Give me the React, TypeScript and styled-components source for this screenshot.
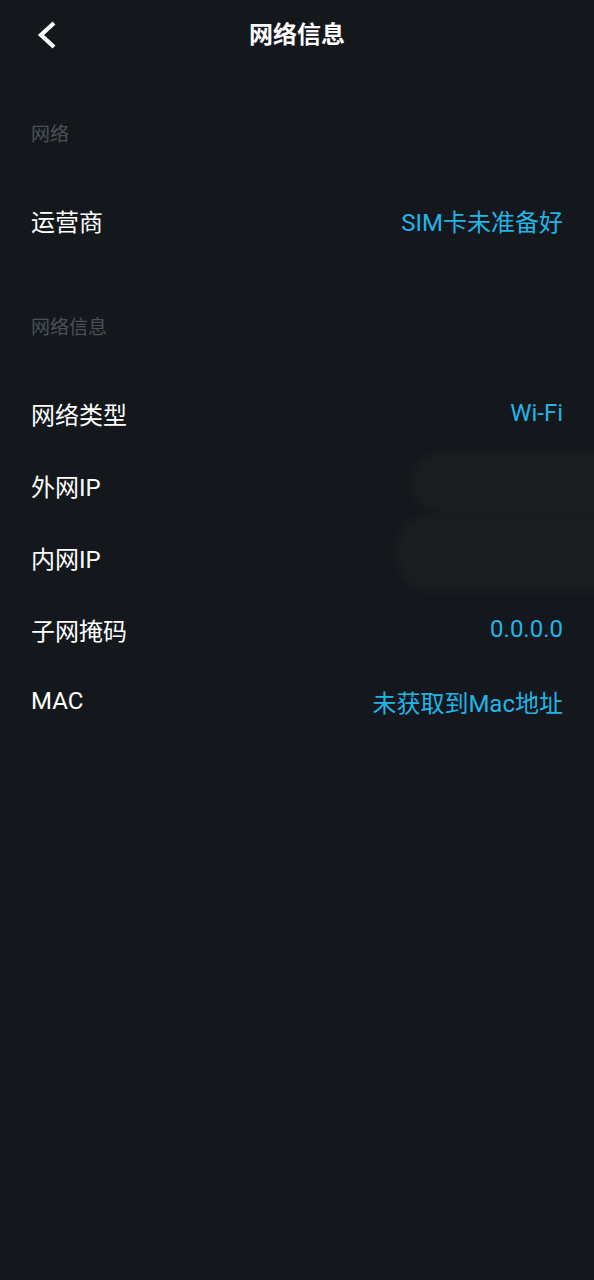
import styled, { createGlobalStyle } from "styled-components";

const GlobalStyle = createGlobalStyle`
  html, body {
    margin: 0;
    padding: 0;
    background: #14181d;
  }
  body {
    font-family: Roboto, "Noto Sans CJK SC", sans-serif;
  }
`;

const Page = styled.div`
  min-height: 1280px;
  background: #14181d;
  color: #ffffff;
`;

const Header = styled.header`
  position: relative;
  height: 70px;
  display: flex;
  align-items: center;
  justify-content: center;
`;

const BackButton = styled.button`
  position: absolute;
  left: 30px;
  top: 15px;
  width: 36px;
  height: 40px;
  padding: 0;
  border: none;
  background: transparent;
  display: flex;
  align-items: center;
  justify-content: center;
`;

const Title = styled.h1`
  margin: 0;
  font-size: 24px;
  font-weight: 700;
  line-height: 30px;
  color: #ffffff;
`;

const SectionTitle = styled.div<{ $top: number }>`
  padding: ${(p) => p.$top}px 31px 36px;
  font-size: 19px;
  line-height: 26px;
  color: #4b5057;
`;

const Row = styled.div`
  position: relative;
  height: 72px;
  padding: 0 31px;
  display: flex;
  align-items: center;
  justify-content: space-between;
  font-size: 24px;
`;

const Label = styled.span`
  color: #ffffff;
`;

const Value = styled.span`
  color: #22b4e6;
`;

const Smudge = styled.div<{ $left: number; $top: number; $height: number }>`
  position: absolute;
  left: ${(p) => p.$left}px;
  right: -10px;
  top: ${(p) => p.$top}px;
  height: ${(p) => p.$height}px;
  border-radius: 30px 8px 8px 30px;
  background: #1b1e21;
  filter: blur(4px);
`;

const BackIcon = () => (
  <svg width="24" height="30" viewBox="0 0 24 30">
    <polyline
      points="18,3 5,15 18,27"
      fill="none"
      stroke="#ffffff"
      strokeWidth="4.2"
      strokeLinejoin="miter"
    />
  </svg>
);

export default function App() {
  return (
    <Page>
      <GlobalStyle />
      <Header>
        <BackButton aria-label="返回">
          <BackIcon />
        </BackButton>
        <Title>网络信息</Title>
      </Header>

      <SectionTitle $top={52}>网络</SectionTitle>
      <Row>
        <Label>运营商</Label>
        <Value>SIM卡未准备好</Value>
      </Row>

      <SectionTitle $top={59}>网络信息</SectionTitle>
      <Row>
        <Label>网络类型</Label>
        <Value>Wi-Fi</Value>
      </Row>
      <Row>
        <Label>外网IP</Label>
        <Smudge $left={412} $top={4} $height={60} />
      </Row>
      <Row>
        <Label>内网IP</Label>
        <Smudge $left={398} $top={-5} $height={74} />
      </Row>
      <Row>
        <Label>子网掩码</Label>
        <Value>0.0.0.0</Value>
      </Row>
      <Row>
        <Label>MAC</Label>
        <Value>未获取到Mac地址</Value>
      </Row>
    </Page>
  );
}
